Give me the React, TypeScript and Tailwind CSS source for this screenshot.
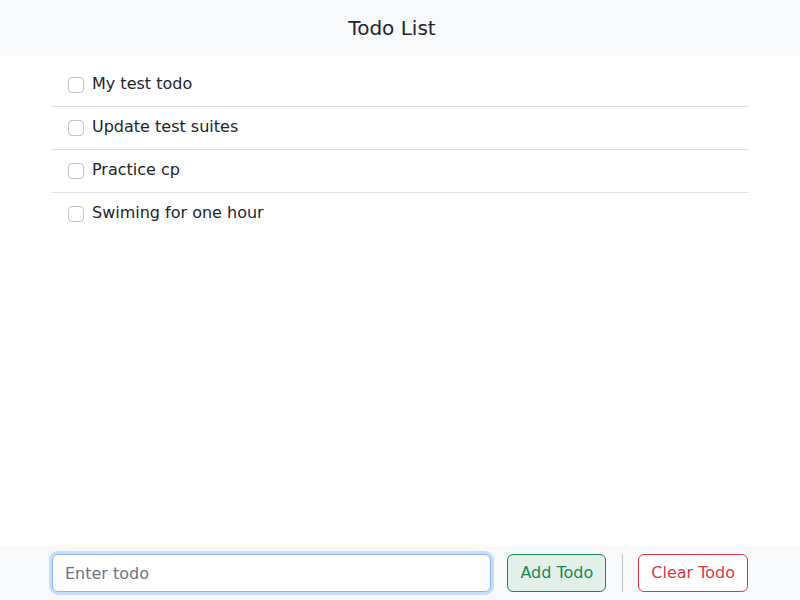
import React from 'react'

const todos = ['My test todo', 'Update test suites', 'Practice cp', 'Swiming for one hour']

const App = () => {
  return (
    <div className="flex flex-col h-[600px] bg-white text-[#212529]" style={{ fontFamily: '"DejaVu Sans", sans-serif' }}>
      <header className="h-[56px] bg-[#f8f9fa] flex items-center justify-center pr-4 shrink-0">
        <h1 className="text-[20px] leading-[24px]">Todo List</h1>
      </header>

      <ul className="mx-[52px] mt-[8px] flex-1">
        {todos.map((t, i) => (
          <li
            key={t}
            className={`h-[43px] flex items-center px-4 pb-[2px] border-b ${i < todos.length - 1 ? 'border-[#dee2e6]' : 'border-transparent'}`}
          >
            <span className="w-4 h-4 border border-[#bfc4c9] rounded-[4px] bg-white mr-2 shrink-0 mt-[1px]"></span>
            <span className="text-[16px] leading-6">{t}</span>
          </li>
        ))}
      </ul>

      <footer className="h-[54px] bg-[#f8f9fa] flex items-center px-[52px] gap-4 shrink-0">
        <input
          placeholder="Enter todo"
          className="flex-1 h-[38px] rounded-[6px] border border-[#86b7fe] bg-white px-3 text-[16px] placeholder:text-[#6c757d] outline-none shadow-[0_0_0_3px_rgba(13,110,253,0.2)]"
        />
        <button className="h-[38px] px-3 rounded-[6px] border border-[#198754] bg-[#e3f0ea] text-[#198754] text-[16px]">
          Add Todo
        </button>
        <div className="w-px h-[38px] bg-[#c8cbce] -mr-px"></div>
        <button className="h-[38px] px-3 rounded-[6px] border border-[#dc3545] bg-white text-[#dc3545] text-[16px]">
          Clear Todo
        </button>
      </footer>
    </div>
  )
}

export default App
